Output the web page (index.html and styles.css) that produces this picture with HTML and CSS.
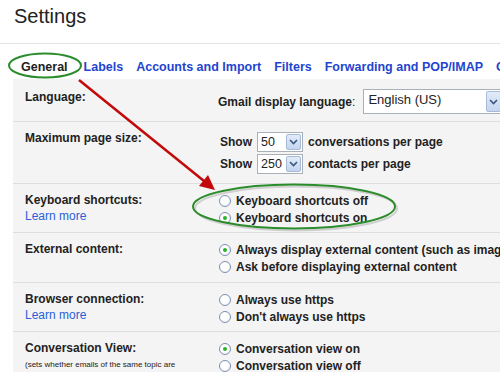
FILE: index.html
```html
<!DOCTYPE html>
<html lang="en">
<head>
    <meta charset="UTF-8">
    <title>Settings</title>
    <link rel="stylesheet" href="styles.css">
</head>
<body>

<div class="page">
    <h1 class="title">Settings</h1>

    <div class="tabs">
        <span class="tab current">General</span>
        <a class="tab" href="#">Labels</a>
        <a class="tab" href="#">Accounts and Import</a>
        <a class="tab" href="#">Filters</a>
        <a class="tab" href="#">Forwarding and POP/IMAP</a>
        <a class="tab" href="#">Chat</a>
    </div>

    <div class="panel">
        <div class="row row-lang">
            <div class="label">Language:</div>
            <div class="value">
                <span class="line"><b>Gmail display language</b>:</span>
                <span class="select select-lang">English (US)<span class="drop"><svg width="9" height="6" viewBox="0 0 9 6"><path d="M1 1 L4.5 4.5 L8 1" fill="none" stroke="#3b5680" stroke-width="1.6"/></svg></span></span>
            </div>
        </div>

        <div class="row row-size">
            <div class="label">Maximum page size:</div>
            <div class="value">
                <div class="line"><b>Show</b> <span class="select select-num">50<span class="drop"><svg width="9" height="6" viewBox="0 0 9 6"><path d="M1 1 L4.5 4.5 L8 1" fill="none" stroke="#3b5680" stroke-width="1.6"/></svg></span></span> <b>conversations per page</b></div>
                <div class="line"><b>Show</b> <span class="select select-num">250<span class="drop"><svg width="9" height="6" viewBox="0 0 9 6"><path d="M1 1 L4.5 4.5 L8 1" fill="none" stroke="#3b5680" stroke-width="1.6"/></svg></span></span> <b>contacts per page</b></div>
            </div>
        </div>

        <div class="row">
            <div class="label">Keyboard shortcuts:<a class="learn" href="#">Learn more</a></div>
            <div class="value">
                <div class="radio"><span class="dot"></span>Keyboard shortcuts off</div>
                <div class="radio"><span class="dot on"></span>Keyboard shortcuts on</div>
            </div>
        </div>

        <div class="row row-ext">
            <div class="label">External content:</div>
            <div class="value">
                <div class="radio"><span class="dot on"></span>Always display external content (such as images sent by trusted senders)</div>
                <div class="radio"><span class="dot"></span>Ask before displaying external content</div>
            </div>
        </div>

        <div class="row">
            <div class="label">Browser connection:<a class="learn" href="#">Learn more</a></div>
            <div class="value">
                <div class="radio"><span class="dot"></span>Always use https</div>
                <div class="radio"><span class="dot"></span>Don't always use https</div>
            </div>
        </div>

        <div class="row row-last">
            <div class="label">Conversation View:<span class="note">(sets whether emails of the same topic are grouped together)</span></div>
            <div class="value">
                <div class="radio"><span class="dot on"></span>Conversation view on</div>
                <div class="radio"><span class="dot"></span>Conversation view off</div>
            </div>
        </div>
    </div>

    <!-- annotation marks drawn over the screenshot -->
    <svg class="marks" width="500" height="372" viewBox="0 0 500 372">
        <ellipse cx="45" cy="65.5" rx="36" ry="12" fill="none" stroke="#2a8c2a" stroke-width="2"/>
        <ellipse cx="296" cy="208.5" rx="101" ry="22" fill="none" stroke="#cfcfcf" stroke-width="2"/>
        <ellipse cx="294" cy="206.5" rx="101" ry="22" fill="none" stroke="#2a8c2a" stroke-width="2"/>
        <line x1="79" y1="80" x2="204" y2="181" stroke="#c20a0a" stroke-width="2.5"/>
        <polygon points="215,190 199,186 208,175" fill="#c20a0a"/>
    </svg>
</div>

</body>
</html>
```

FILE: styles.css
```css
* {
    box-sizing: border-box;
}

body {
    margin: 0;
    background: #fff;
    color: #222;
    font-family: Arial, 'Liberation Sans', sans-serif;
    font-size: 12px;
}

.page {
    position: relative;
    width: 500px;
    height: 372px;
    overflow: hidden;
}

.title {
    margin: 0;
    height: 44px;
    padding: 5px 0 0 14px;
    font-size: 20px;
    font-weight: normal;
    line-height: 23px;
    color: #222;
    border-bottom: 1px solid #e4e4e4;
}

.tabs {
    display: flex;
    gap: 13px;
    padding: 15px 0 4px 21px;
    white-space: nowrap;
    font-size: 12.5px;
    font-weight: bold;
    line-height: 16px;
}

.tab {
    color: #1f45cf;
    text-decoration: none;
}

.tab.current {
    color: #222;
    margin-right: 3px;
}

.panel {
    margin-left: 13px;
    background: #f4f4f4;
    height: 300px;
}

.row {
    display: grid;
    grid-template-columns: 205px 1fr;
    border-bottom: 1px solid #dedede;
    padding-bottom: 6px;
    white-space: nowrap;
}

.label {
    padding: 8px 0 0 12px;
    font-weight: bold;
    line-height: 16px;
}

.learn {
    display: block;
    font-weight: normal;
    color: #2a5fd6;
    text-decoration: none;
}

.note {
    display: block;
    width: 172px;
    white-space: normal;
    font-size: 8px;
    font-weight: normal;
    line-height: 18px;
}

.value {
    padding-top: 8px;
}

.radio {
    display: flex;
    align-items: center;
    height: 17px;
    font-weight: bold;
}

.dot {
    width: 12px;
    height: 12px;
    margin: 0 5px 0 1px;
    border: 1px solid #7c90b0;
    border-radius: 50%;
    background: radial-gradient(circle at 40% 40%, #fff 40%, #e6ebf2);
    position: relative;
}

.dot.on::after {
    content: "";
    position: absolute;
    left: 3px;
    top: 3px;
    width: 4px;
    height: 4px;
    border-radius: 50%;
    background: #2eb02e;
}

/* language row */
.row-lang {
    padding-bottom: 7px;
}

.row-lang .label {
    padding-top: 10px;
}

.row-lang .value {
    display: flex;
    align-items: center;
    gap: 8px;
    padding-top: 10px;
}

/* page size row */
.row-size {
    padding-bottom: 9px;
}

.row-size .value {
    padding: 10px 0 0 2px;
    display: flex;
    flex-direction: column;
    gap: 2px;
}

.row-size .line {
    display: flex;
    align-items: center;
    height: 20px;
    gap: 5px;
}

.row-ext {
    padding-bottom: 7px;
}

.select {
    display: inline-flex;
    align-items: center;
    justify-content: space-between;
    background: #fff;
    border: 1px solid #a9b0b8;
    font-weight: normal;
    color: #222;
}

.select-lang {
    width: 140px;
    height: 25px;
    padding-left: 4px;
    font-size: 13px;
    align-items: flex-start;
    padding-top: 2px;
}

.select-num {
    width: 46px;
    height: 20px;
    padding-left: 3px;
    font-size: 12.5px;
}

.drop {
    display: flex;
    align-items: center;
    justify-content: center;
    width: 15px;
    align-self: stretch;
    margin: 1px;
    border: 1px solid #a7bbd9;
    border-radius: 2px;
    background: linear-gradient(#e2ebf8, #c4d5ef);
}

.select-lang .drop {
    margin-top: -1px;
}

.marks {
    position: absolute;
    left: 0;
    top: 0;
    pointer-events: none;
}
```
